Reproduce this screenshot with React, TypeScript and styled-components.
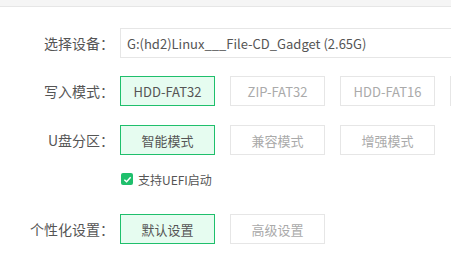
import React from 'react';
import styled, { createGlobalStyle } from 'styled-components';

const GlobalStyle = createGlobalStyle`
  html, body {
    margin: 0;
    padding: 0;
    background: #ffffff;
    overflow: hidden;
  }
  body {
    font-family: "Noto Sans CJK SC", "Noto Sans", sans-serif;
    color: #555555;
  }
`;

const Page = styled.div`
  width: 451px;
  height: 255px;
  overflow: hidden;
`;

const TopBar = styled.div`
  height: 6px;
  background: #f5f5f5;
  border-bottom: 1px solid #e6e6e6;
`;

const Form = styled.div`
  display: flex;
  flex-direction: column;
  padding-top: 21px;
`;

const Row = styled.div<{ $mt?: number }>`
  display: flex;
  align-items: center;
  height: 30px;
  margin-top: ${p => p.$mt ?? 0}px;
`;

const Label = styled.div`
  width: 114px;
  flex: 0 0 114px;
  text-align: right;
  font-size: 14px;
  color: #555555;
  margin-right: 6px;
  white-space: nowrap;
`;

const Field = styled.div`
  flex: 0 0 420px;
  height: 30px;
  box-sizing: border-box;
  border: 1px solid #e6e6e6;
  padding-left: 6px;
  display: flex;
  align-items: center;
  font-size: 13px;
  color: #555555;
  white-space: nowrap;
`;

const Options = styled.div`
  display: flex;
  flex: 0 0 auto;
  gap: 15px;
`;

const Option = styled.div<{ $active?: boolean }>`
  flex: 0 0 95px;
  height: 30px;
  box-sizing: border-box;
  display: flex;
  align-items: center;
  justify-content: center;
  font-size: 13px;
  white-space: nowrap;
  border: 1px solid ${p => (p.$active ? '#1fbf6c' : '#e6e6e6')};
  background: ${p => (p.$active ? '#e6fcf0' : '#ffffff')};
  color: ${p => (p.$active ? '#555555' : '#aaaaaa')};
`;

const CheckRow = styled.label`
  display: flex;
  align-items: center;
  gap: 5px;
  margin: 18px 0 0 121px;
  height: 12px;
  font-size: 12px;
  color: #555555;
`;

const Box = styled.span`
  width: 12px;
  height: 12px;
  border-radius: 2px;
  background: #1fbf6c;
  display: flex;
  align-items: center;
  justify-content: center;
`;

// the fourth write mode sits past the right edge of the window, only its border shows
const groups = [
  { label: '写入模式：', items: ['HDD-FAT32', 'ZIP-FAT32', 'HDD-FAT16', ''], mt: 18 },
  { label: 'U盘分区：', items: ['智能模式', '兼容模式', '增强模式'], mt: 19 },
];

export default function App() {
  return (
    <Page>
      <GlobalStyle />
      <TopBar />
      <Form>
        <Row>
          <Label>选择设备：</Label>
          <Field>G:(hd2)Linux___File-CD_Gadget (2.65G)</Field>
        </Row>
        {groups.map(g => (
          <Row key={g.label} $mt={g.mt}>
            <Label>{g.label}</Label>
            <Options>
              {g.items.map((item, i) => (
                <Option key={i} $active={i === 0}>
                  {item}
                </Option>
              ))}
            </Options>
          </Row>
        ))}
        <CheckRow>
          <Box>
            <svg width="9" height="9" viewBox="0 0 10 10">
              <path d="M1.5 5.2 L4 7.5 L8.5 2.5" fill="none" stroke="#fff" strokeWidth="1.6" />
            </svg>
          </Box>
          支持UEFI启动
        </CheckRow>
        <Row $mt={29}>
          <Label>个性化设置：</Label>
          <Options>
            <Option $active>默认设置</Option>
            <Option>高级设置</Option>
          </Options>
        </Row>
      </Form>
    </Page>
  );
}
